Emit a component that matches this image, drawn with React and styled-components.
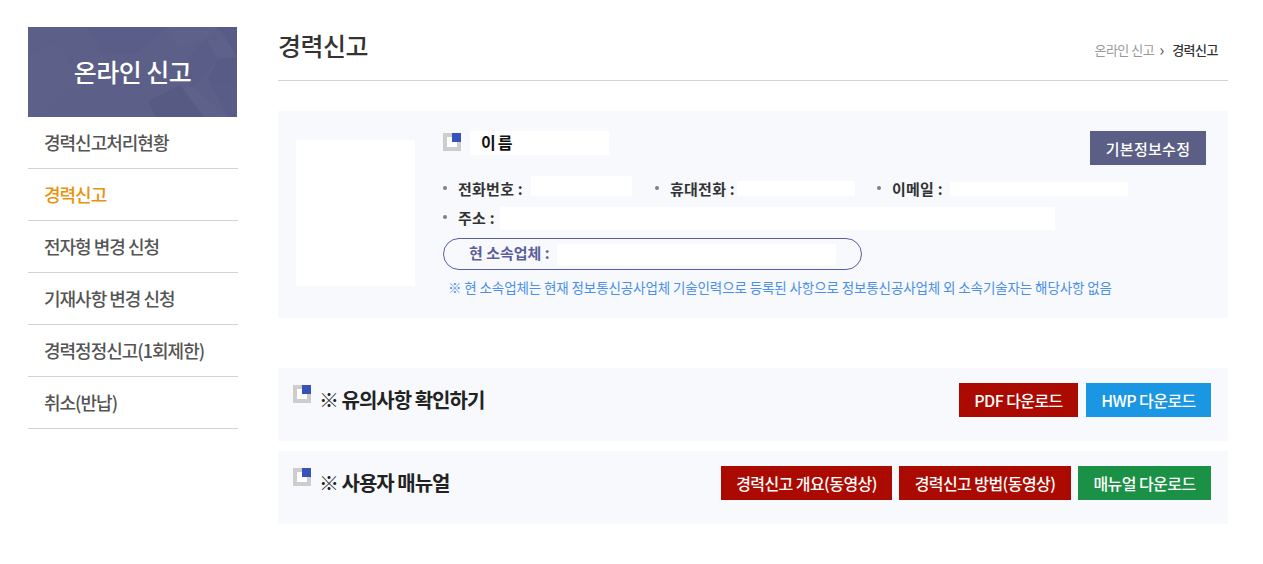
import React from "react";
import styled, { createGlobalStyle } from "styled-components";

const menus = ["경력신고처리현황", "경력신고", "전자형 변경 신청", "기재사항 변경 신청", "경력정정신고(1회제한)", "취소(반납)"];

const Mark = () => (
  <MarkBox>
    <MarkDot />
  </MarkBox>
);

const App = () => {
  return (
    <>
      <GlobalStyle />
      <Page>
        <Sidebar>
          <Banner>
            <BannerArt viewBox="0 0 209 90" preserveAspectRatio="none">
              <polygon points="60,0 140,0 110,25 75,28" fill="#5a5d87" />
              <polygon points="140,0 190,0 178,12 150,22" fill="#5e618a" />
              <polygon points="178,12 200,14 209,30 190,32" fill="#5e618a" />
              <polygon points="190,0 209,0 209,30 200,14" fill="#585b85" />
              <polygon points="178,12 190,32 165,60 152,40" fill="#5a5d87" />
              <polygon points="190,32 209,30 209,60 180,52" fill="#585b85" />
              <polygon points="120,74 152,58 176,90 128,90" fill="#575a82" />
              <polygon points="152,58 165,60 200,90 176,90" fill="#5e6189" />
              <polygon points="180,52 209,60 209,90 200,90" fill="#595c86" />
              <polygon points="0,30 30,15 50,55 15,90 0,90" fill="#5d6089" />
            </BannerArt>
            <BannerTitle>온라인 신고</BannerTitle>
          </Banner>
          <Menu>
            {menus.map((m, i) => (
              <MenuItem key={m} $active={i === 1}>
                {m}
              </MenuItem>
            ))}
          </Menu>
        </Sidebar>

        <Main>
          <Header>
            <PageTitle>경력신고</PageTitle>
            <Crumbs>
              <span>온라인 신고</span>
              <CrumbArrow>›</CrumbArrow>
              <CrumbNow>경력신고</CrumbNow>
            </Crumbs>
          </Header>

          <InfoPanel>
            <Photo />
            <InfoBody>
              <NameRow>
                <Mark />
                <NameBlock>이름</NameBlock>
                <EditButton>기본정보수정</EditButton>
              </NameRow>
              <FieldRow>
                <Field $w={212}>
                  <FieldLabel $top={4}>전화번호 :</FieldLabel>
                  <Blank $w={101} $h={20} $ml={8} />
                </Field>
                <Field $w={222}>
                  <FieldLabel $top={4}>휴대전화 :</FieldLabel>
                  <Blank $w={118} $h={15} $ml={2} />
                </Field>
                <Field>
                  <FieldLabel $top={4}>이메일 :</FieldLabel>
                  <Blank $w={178} $h={14} $ml={7} />
                </Field>
              </FieldRow>
              <AddressRow>
                <Field>
                  <FieldLabel $bottom={3}>주소 :</FieldLabel>
                  <Blank $w={555} $h={23} $ml={5} />
                </Field>
              </AddressRow>
              <CompanyPill>
                <CompanyLabel>현 소속업체 :</CompanyLabel>
                <Blank $w={279} $h={21} />
              </CompanyPill>
              <Note>※ 현 소속업체는 현재 정보통신공사업체 기술인력으로 등록된 사항으로 정보통신공사업체 외 소속기술자는 해당사항 없음</Note>
            </InfoBody>
          </InfoPanel>

          <Section $first>
            <SectionTitle>
              <Mark />
              <SectionText>※ 유의사항 확인하기</SectionText>
            </SectionTitle>
            <Buttons>
              <ActionButton $bg="#ab0a00" $w={119}>PDF 다운로드</ActionButton>
              <ActionButton $bg="#1a96e2" $w={125}>HWP 다운로드</ActionButton>
            </Buttons>
          </Section>

          <Section>
            <SectionTitle>
              <Mark />
              <SectionText>※ 사용자 매뉴얼</SectionText>
            </SectionTitle>
            <Buttons $tight>
              <ActionButton $bg="#ab0a00" $w={171}>경력신고 개요(동영상)</ActionButton>
              <ActionButton $bg="#ab0a00" $w={172}>경력신고 방법(동영상)</ActionButton>
              <ActionButton $bg="#1b9145" $w={133}>매뉴얼 다운로드</ActionButton>
            </Buttons>
          </Section>
        </Main>
      </Page>
    </>
  );
};

const GlobalStyle = createGlobalStyle`
  html, body {
    margin: 0;
    padding: 0;
    background: #fff;
    font-family: "Noto Sans CJK KR", "Noto Sans", sans-serif;
    color: #222;
  }
  * {
    box-sizing: border-box;
  }
`;

const Page = styled.div`
  display: flex;
  gap: 40px;
  padding: 27px 35px 40px 28px;
  width: 1263px;
`;

const Sidebar = styled.aside`
  width: 210px;
  flex-shrink: 0;
`;

const Banner = styled.div`
  position: relative;
  width: 209px;
  height: 90px;
  padding-bottom: 2px;
  background: #5c5f88;
  display: flex;
  align-items: center;
  justify-content: center;
  overflow: hidden;
`;

const BannerArt = styled.svg`
  position: absolute;
  inset: 0;
  width: 100%;
  height: 100%;
`;

const BannerTitle = styled.h2`
  position: relative;
  margin: 0;
  font-size: 25px;
  font-weight: 500;
  letter-spacing: -0.5px;
  color: #fff;
`;

const Menu = styled.ul`
  list-style: none;
  margin: 0;
  padding: 0;
`;

const MenuItem = styled.li`
  height: 52px;
  line-height: 50px;
  padding-left: 16px;
  border-bottom: 1px solid #d2d2d2;
  font-size: 18px;
  font-weight: 500;
  letter-spacing: -1px;
  color: ${(p) => (p.$active ? "#e8930c" : "#555")};
`;

const Main = styled.main`
  width: 950px;
`;

const Header = styled.header`
  display: flex;
  justify-content: space-between;
  align-items: center;
  height: 54px;
  padding: 0 10px 17px 0;
  margin-bottom: 30px;
  border-bottom: 1px solid #d2d2d2;
`;

const PageTitle = styled.h1`
  margin: 0;
  font-size: 25px;
  font-weight: 500;
  letter-spacing: -0.5px;
  color: #333;
`;

const Crumbs = styled.div`
  display: flex;
  align-items: center;
  font-size: 13px;
  letter-spacing: -0.5px;
  color: #999;
  margin-top: 8px;
`;

const CrumbArrow = styled.span`
  width: 18px;
  padding-left: 5px;
  font-size: 17px;
  line-height: 16px;
  color: #555;
`;

const CrumbNow = styled.span`
  color: #333;
  font-weight: 500;
`;

const InfoPanel = styled.section`
  display: flex;
  height: 207px;
  padding: 20px 22px 0 18px;
  background: #f7f9fd;
`;

const Photo = styled.div`
  width: 119px;
  height: 146px;
  margin-top: 9px;
  background: #fff;
`;

const InfoBody = styled.div`
  flex: 1;
  margin-left: 28px;
`;

const NameRow = styled.div`
  display: flex;
  align-items: flex-start;
  height: 45px;
`;

const MarkBox = styled.span`
  position: relative;
  display: block;
  width: 18px;
  height: 18px;
  flex-shrink: 0;
  margin-top: 2px;
  background: #fff;
  border: 4px solid #cdcdcd;
`;

const MarkDot = styled.span`
  position: absolute;
  top: -4px;
  right: -4px;
  width: 9px;
  height: 9px;
  background: #3553b9;
`;

const NameBlock = styled.div`
  width: 139px;
  height: 24px;
  margin-left: 9px;
  padding-left: 11px;
  background: #fff;
  font-size: 16px;
  font-weight: 700;
  letter-spacing: 2px;
  line-height: 22px;
  color: #111;
`;

const EditButton = styled.button`
  width: 116px;
  height: 34px;
  margin-left: auto;
  border: 0;
  padding: 0;
  background: #5c5f85;
  color: #fff;
  font-family: inherit;
  font-size: 15px;
  font-weight: 500;
  letter-spacing: 0.3px;
`;

const FieldRow = styled.div`
  display: flex;
  height: 20px;
`;

const AddressRow = styled.div`
  display: flex;
  height: 23px;
  margin-top: 11px;
`;

const Field = styled.div`
  display: flex;
  align-items: center;
  width: ${(p) => (p.$w ? `${p.$w}px` : "auto")};
`;

const FieldLabel = styled.span`
  position: relative;
  margin-top: ${(p) => p.$top || 0}px;
  margin-bottom: ${(p) => p.$bottom || 0}px;
  padding-left: 15px;
  font-size: 15px;
  font-weight: 700;
  letter-spacing: 0.25px;
  color: #333;
  white-space: nowrap;
  &:before {
    content: "";
    position: absolute;
    left: 0;
    top: 50%;
    width: 4px;
    height: 4px;
    margin-top: -2px;
    border-radius: 50%;
    background: #808080;
  }
`;

const Blank = styled.span`
  display: block;
  align-self: flex-end;
  margin-left: ${(p) => p.$ml || 0}px;
  width: ${(p) => p.$w}px;
  height: ${(p) => p.$h}px;
  background: #fff;
`;

const CompanyPill = styled.div`
  display: flex;
  align-items: center;
  width: 419px;
  height: 32px;
  margin-top: 8px;
  padding: 0 0 4px 25px;
  border: 1px solid #585ead;
  border-radius: 16px;
`;

const CompanyLabel = styled.span`
  width: 88px;
  font-size: 15px;
  font-weight: 700;
  color: #5c5f9a;
  white-space: nowrap;
`;

const Note = styled.p`
  margin: 7px 0 0 5px;
  font-size: 13.5px;
  letter-spacing: -0.11px;
  color: #4a8fea;
  white-space: nowrap;
`;

const Section = styled.section`
  display: flex;
  justify-content: space-between;
  height: 73px;
  margin-top: ${(p) => (p.$first ? "50px" : "10px")};
  padding: 15px 17px 0 15px;
  background: #f7f9fd;
`;

const SectionTitle = styled.div`
  display: flex;
  align-items: flex-start;
`;

const SectionText = styled.h3`
  margin: 0 0 0 8px;
  font-size: 20px;
  font-weight: 700;
  letter-spacing: -1px;
  line-height: 34px;
  color: #222;
`;

const Buttons = styled.div`
  display: flex;
  gap: ${(p) => (p.$tight ? "7px" : "8px")};
`;

const ActionButton = styled.button`
  width: ${(p) => p.$w}px;
  height: 34px;
  border: 0;
  padding: 0;
  background: ${(p) => p.$bg};
  color: #fff;
  font-family: inherit;
  font-size: 16px;
  font-weight: 500;
  letter-spacing: -0.57px;
  white-space: nowrap;
`;

export default App;
